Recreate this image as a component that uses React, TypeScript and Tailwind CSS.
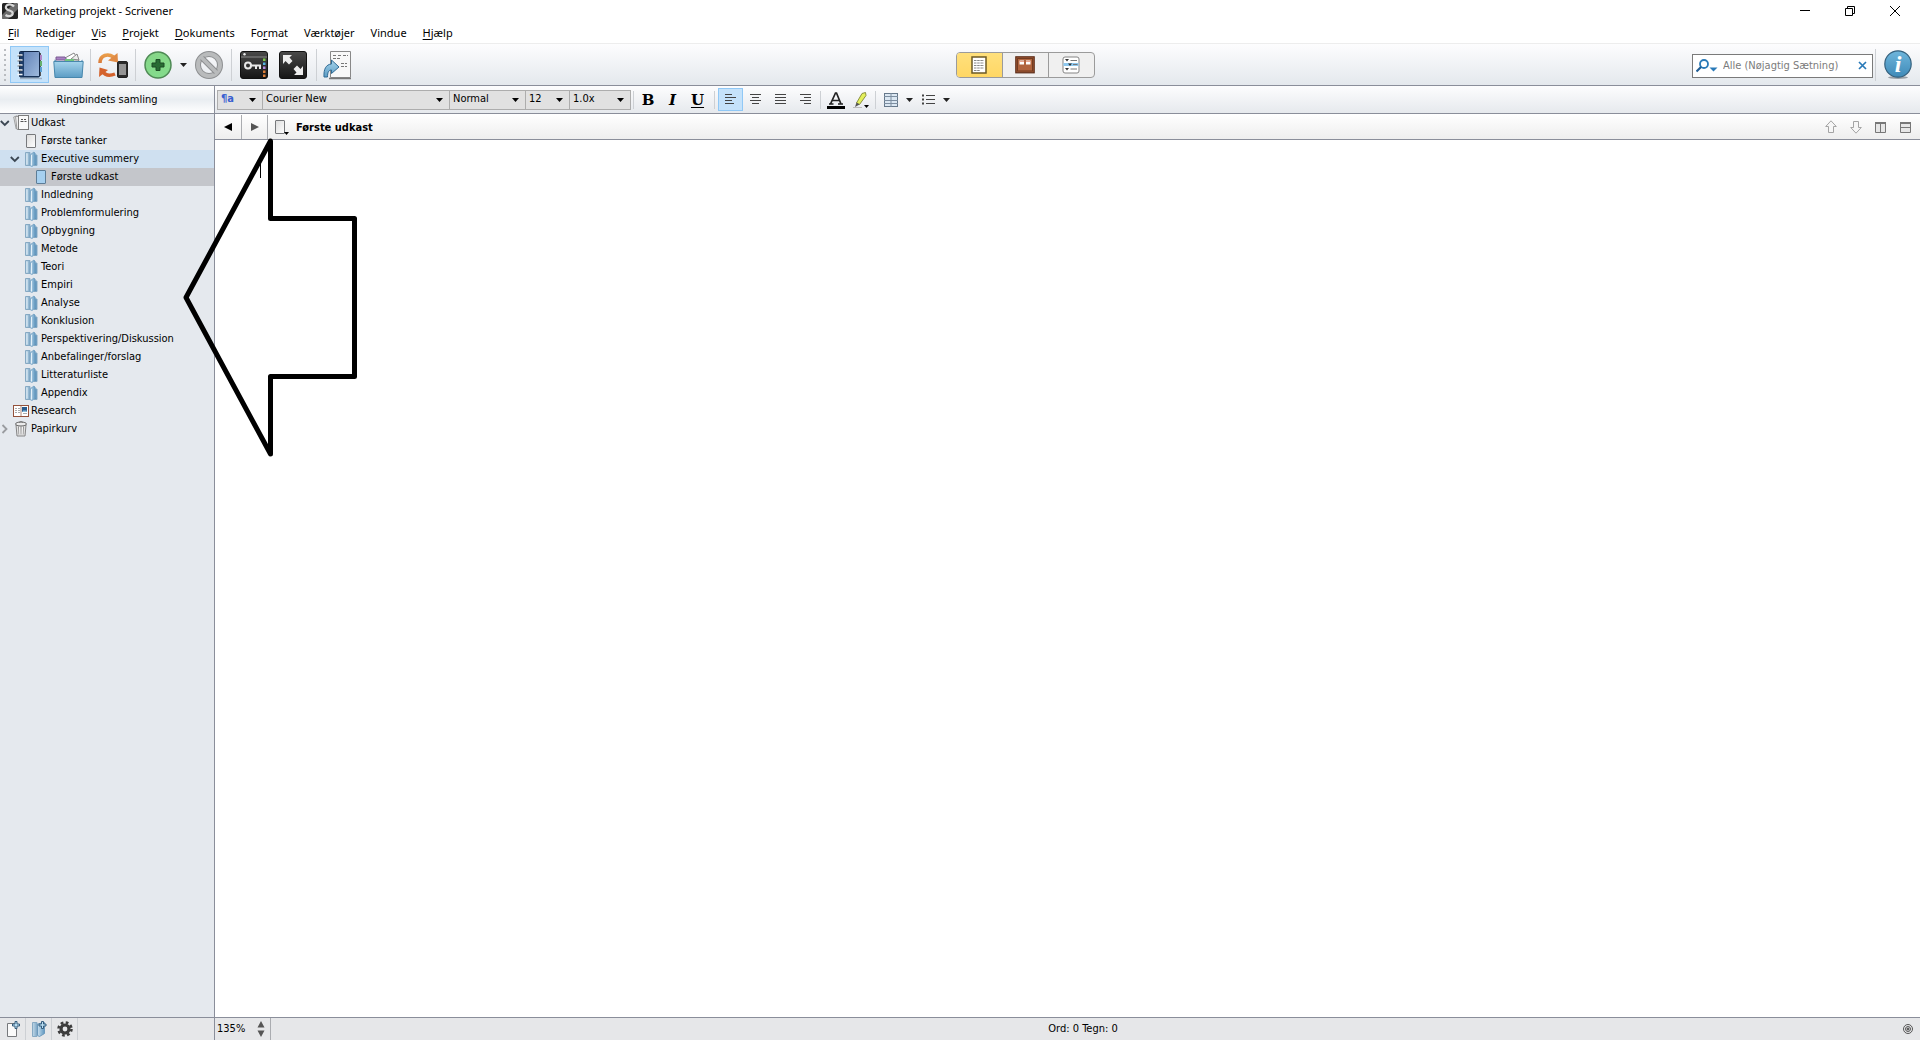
import type { ReactNode } from 'react';

type TreeItem = {
  label: string;
  level: number;
  icon: 'draft' | 'page' | 'folder' | 'bluePage' | 'research' | 'trash';
  open?: boolean;
  closed?: boolean;
  row?: string;
};

const tree: TreeItem[] = [
  { label: 'Udkast', level: 0, icon: 'draft', open: true },
  { label: 'Første tanker', level: 1, icon: 'page' },
  { label: 'Executive summery', level: 1, icon: 'folder', open: true, row: 'bg-[#cfe0f0]' },
  { label: 'Første udkast', level: 2, icon: 'bluePage', row: 'bg-[#c4c6cb]' },
  { label: 'Indledning', level: 1, icon: 'folder' },
  { label: 'Problemformulering', level: 1, icon: 'folder' },
  { label: 'Opbygning', level: 1, icon: 'folder' },
  { label: 'Metode', level: 1, icon: 'folder' },
  { label: 'Teori', level: 1, icon: 'folder' },
  { label: 'Empiri', level: 1, icon: 'folder' },
  { label: 'Analyse', level: 1, icon: 'folder' },
  { label: 'Konklusion', level: 1, icon: 'folder' },
  { label: 'Perspektivering/Diskussion', level: 1, icon: 'folder' },
  { label: 'Anbefalinger/forslag', level: 1, icon: 'folder' },
  { label: 'Litteraturliste', level: 1, icon: 'folder' },
  { label: 'Appendix', level: 1, icon: 'folder' },
  { label: 'Research', level: 0, icon: 'research' },
  { label: 'Papirkurv', level: 0, icon: 'trash', closed: true },
];

const indent = ['pl-0', 'pl-[10px]', 'pl-[20px]'];

// [before, underlined, after]
const menus = [
  ['', 'F', 'il'],
  ['Rediger', '', ''],
  ['', 'V', 'is'],
  ['', 'P', 'rojekt'],
  ['', 'D', 'okuments'],
  ['Fo', 'r', 'mat'],
  ['Værktøjer', '', ''],
  ['Vindue', '', ''],
  ['', 'H', 'jælp'],
];

function Gradients() {
  return (
    <svg className="absolute size-0" aria-hidden="true">
      <defs>
        <linearGradient id="folderA" x1="0" x2="1">
          <stop offset="0" stopColor="#c3d9e8" />
          <stop offset="1" stopColor="#7fa9c8" />
        </linearGradient>
        <linearGradient id="folderB" x1="0" x2="1">
          <stop offset="0" stopColor="#c9dfee" />
          <stop offset="1" stopColor="#5f97c0" />
        </linearGradient>
        <linearGradient id="paper" x1="0" y1="0" x2="1" y2="1">
          <stop offset="0" stopColor="#dcdcdc" />
          <stop offset="1" stopColor="#ffffff" />
        </linearGradient>
        <linearGradient id="book" x1="0" y1="0" x2="1" y2="1">
          <stop offset="0" stopColor="#6484b8" />
          <stop offset="1" stopColor="#9db9dc" />
        </linearGradient>
        <linearGradient id="bin" x1="0" y1="0" x2="0" y2="1">
          <stop offset="0" stopColor="#a5d4ec" />
          <stop offset="1" stopColor="#5c9cc4" />
        </linearGradient>
        <linearGradient id="orange" x1="0" y1="0" x2="0" y2="1">
          <stop offset="0" stopColor="#e99c49" />
          <stop offset="1" stopColor="#d97a3a" />
        </linearGradient>
        <linearGradient id="green" x1="0" y1="0" x2="0" y2="1">
          <stop offset="0" stopColor="#86d688" />
          <stop offset="1" stopColor="#84dc8c" />
        </linearGradient>
        <linearGradient id="dark" x1="0" y1="0" x2="0" y2="1">
          <stop offset="0" stopColor="#4a4a4a" />
          <stop offset="1" stopColor="#151515" />
        </linearGradient>
        <linearGradient id="info" x1="0" y1="0" x2="0" y2="1">
          <stop offset="0" stopColor="#6fb6dc" />
          <stop offset="1" stopColor="#3f8ab8" />
        </linearGradient>
      </defs>
    </svg>
  );
}

function Caret({ className = 'text-black' }: { className?: string }) {
  return (
    <svg width="7" height="4" viewBox="0 0 7 4" className={className}>
      <path d="M0 0h7L3.5 4z" fill="currentColor" />
    </svg>
  );
}

function Separator({ className }: { className: string }) {
  return <span className={`w-px shrink-0 bg-[#cdd0d4] ${className}`} />;
}

function TreeIcon({ icon }: { icon: TreeItem['icon'] }) {
  if (icon === 'folder')
    return (
      <svg width="16" height="16" viewBox="0 0 16 16">
        <path d="M2.5 1.5h4.5v13H2.500z" fill="url(#folderA)" stroke="#86a9c3" />
        <path d="M11.500 4h2.500v10.500h-3z" fill="#5d93bd" stroke="#86a9c3" />
        <path d="M7.500 3.500L11 1l1.200 1.500v10.500L9 15.500l-2-1z" fill="url(#folderB)" stroke="#6f9dc0" strokeWidth=".8" />
        <path d="M4 2.500v11M8.500 4v10.500" stroke="#e4f0f8" />
      </svg>
    );
  if (icon === 'page' || icon === 'bluePage')
    return (
      <svg width="16" height="16" viewBox="0 0 16 16">
        {icon === 'page' ? (
          <rect x="3.500" y="1.500" width="9" height="13" rx="0.500" fill="url(#paper)" stroke="#77797c" />
        ) : (
          <rect x="3.500" y="1.500" width="9" height="13" rx="0.500" fill="#a6d0f0" stroke="#5d7d97" />
        )}
      </svg>
    );
  if (icon === 'draft')
    return (
      <svg width="16" height="16" viewBox="0 0 16 16">
        <path d="M.7 2l3.500-1.200V13l-1 1z" fill="#eee" stroke="#8b8b8b" strokeWidth=".8" />
        <path d="M2.500 1.500h4v13H4z" fill="#eee" stroke="#8b8b8b" strokeWidth=".8" />
        <rect x="5.500" y=".5" width="10" height="14" fill="#fafafa" stroke="#7c7c7c" />
        <path d="M8 4.500h2m1 0h2M7.500 6.500h3m1 0h2" stroke="#555" />
      </svg>
    );
  if (icon === 'research')
    return (
      <svg width="16" height="16" viewBox="0 0 16 16">
        <rect x=".5" y="2.500" width="15" height="11" fill="#fff" stroke="#94513a" />
        <path d="M8 3v10" stroke="#b08a7a" />
        <path d="M2 5.500h2m1 0h2M2 7.500h2m1 0h2M2 9.500h2m1 0h2M10 10.500h4" stroke="#aaa" />
        <rect x="9" y="4" width="5" height="5" fill="#285a8c" />
        <path d="M9 9l2-2 1 1 1-1 1 2z" fill="#8fc0de" />
      </svg>
    );
  return (
    <svg width="16" height="16" viewBox="0 0 16 16">
      <path d="M3 4h10l-1 11H4z" fill="#e2e2e2" stroke="#858585" />
      <path d="M5.500 5.500l.5 8M8 5.500v8m2.500-8l-.5 8" stroke="#909090" />
      <path d="M6.500 5.500l.3 8m2.400 0l.3-8" stroke="#fff" strokeWidth=".7" />
      <ellipse cx="8" cy="3" rx="5.500" ry="2" fill="#ececec" stroke="#666" />
      <path d="M6 1.500Q8-.5 10 1.500" fill="none" stroke="#777" />
    </svg>
  );
}

function Chevron({ open }: { open?: boolean }) {
  return (
    <svg width="10" height="10" viewBox="0 0 10 10" fill="none" strokeWidth="1.8">
      {open ? <path d="M.8 3L4.800 7l4-4" stroke="#3b4652" /> : <path d="M2.500 1l4 4-4 4" stroke="#9a9ca0" />}
    </svg>
  );
}

function Combo({ label, value, width, className = '' }: { label: string; value: string; width: string; className?: string }) {
  return (
    <div className={`relative -ml-px flex items-center border border-[#adadad] bg-[#e1e1e1] h-5 ${width}`}>
      <select aria-label={label} className={`h-full w-full appearance-none pl-[3px] outline-none ${className}`}>
        <option>{value}</option>
      </select>
      <span className="pointer-events-none absolute right-[6px]">
        <Caret />
      </span>
    </div>
  );
}

function ToolButton({ label, active, className = 'w-9', children }: { label: string; active?: boolean; className?: string; children: ReactNode }) {
  return (
    <button
      aria-label={label}
      className={`flex shrink-0 items-center justify-center ${className} ${active ? 'border border-[#90c8f6] bg-[#c5e2fa]' : ''}`}
    >
      {children}
    </button>
  );
}

function TitleBar() {
  return (
    <header className="flex h-[22px] items-center pl-[2px] font-['Noto_Sans',sans-serif]">
      <svg width="16" height="16" viewBox="0 0 16 16">
        <rect width="16" height="16" rx="1.500" fill="#242424" />
        <path d="M0 12L12 0h2.500L16 1.500V6L6 16H1.500L0 14.500z" fill="#6b6b6b" />
        <path d="M12 3.500C9-.3 2.500 1.500 4.200 5.600 5.500 8.200 10.500 7 10.700 10.200 10.800 13.500 6.500 14 3.500 12" fill="none" stroke="#d8d8d8" strokeWidth="2.200" />
      </svg>
      <h1 className="ml-[5px] grow pt-px text-[11px]">Marketing projekt - Scrivener</h1>
      <div className="flex items-center gap-[35px] pr-5">
        <button aria-label="Minimer">
          <svg width="10" height="10" viewBox="0 0 10 10"><path d="M0 4.500h10" stroke="#000" /></svg>
        </button>
        <button aria-label="Gendan">
          <svg width="10" height="10" viewBox="0 0 10 10" fill="none" stroke="#000"><path d="M.5 2.500h7v7h-7zM2.500 2.500v-2h7v7h-2" /></svg>
        </button>
        <button aria-label="Luk">
          <svg width="10" height="10" viewBox="0 0 10 10"><path d="M0 0l10 10M10 0L0 10" stroke="#000" /></svg>
        </button>
      </div>
    </header>
  );
}

function MainToolbar() {
  return (
    <div className="flex h-[43px] items-center justify-between border-t border-b border-t-[#ededed] border-b-[#8a8e9a] bg-linear-to-b from-[#fdfdfe] to-[#e4e8ed]">
      <div className="flex h-full w-[358px] items-center">
        <svg width="10" height="36" viewBox="0 0 10 36">
          <path d="M5 2v34" stroke="#b9bcc0" strokeWidth="2" strokeDasharray="2 3" />
        </svg>
        <ToolButton label="Ringbind" active className="h-[37px] w-[39px]">
          <svg width="28" height="30" viewBox="0 0 28 30">
            <path d="M4 28.500h22" stroke="#9fb0c4" strokeWidth="1.500" />
            <path d="M22 3h3v23h-3z" fill="#555" />
            <path d="M23 5h3v5h-3z" fill="#b086c8" />
            <path d="M23 11h3v5h-3z" fill="#63b06b" />
            <path d="M23 17h3v5h-3z" fill="#5da0d0" />
            <rect x="3.500" y="1.500" width="20" height="25.500" rx="1" fill="#1d3c68" stroke="#132848" />
            <rect x="8" y="2" width="15" height="24" fill="url(#book)" />
            <path d="M1.500 5h5M1.500 10h5M1.500 15h5M1.500 20h5M1.500 24.500h5" stroke="#f5f5f5" strokeWidth="1.500" />
            <path d="M1.500 6h4M1.500 11h4M1.500 16h4M1.500 21h4" stroke="#444" strokeWidth=".7" />
          </svg>
        </ToolButton>
        <ToolButton label="Samlinger" className="w-[38px]">
          <svg width="31" height="28" viewBox="0 0 31 28">
            <path d="M12 7l9-5 5 8H12z" fill="#fff" stroke="#888" />
            <path d="M18 8l6-5 2 6z" fill="#eee" stroke="#888" />
            <path d="M3 6h9l2 3H3z" fill="#a981c4" stroke="#7a5c92" />
            <path d="M12 8h9v3h-9z" fill="#72c47e" />
            <path d="M1.500 8.500l3 2h23l2-2v5h-28z" fill="#4a86ad" />
            <path d="M.8 10.500h29.400l-1.200 16H2z" fill="url(#bin)" stroke="#4787ad" />
          </svg>
        </ToolButton>
        <Separator className="ml-[3px] h-8" />
        <ToolButton label="Synkroniser" className="w-[44px]">
          <svg width="32" height="28" viewBox="0 0 32 28">
            <path d="M3 12C3 4 11 2 16.500 6" fill="none" stroke="url(#orange)" strokeWidth="3.500" />
            <path d="M20.500 2l.5 9.500-10-2z" fill="#e08b45" />
            <path d="M5 20c3 4.500 8 5 13 3" fill="none" stroke="#d4622c" strokeWidth="3.500" />
            <path d="M2 26l.5-9.500 8.500 2.500z" fill="#d4622c" />
            <rect x="20.500" y="10.500" width="10" height="16" rx="1.500" fill="#2b2b2b" stroke="#222" />
            <rect x="22" y="13" width="7" height="11" fill="#949494" />
          </svg>
        </ToolButton>
        <Separator className="h-8" />
        <ToolButton label="Tilføj" className="ml-1 w-9">
          <svg width="30" height="30" viewBox="0 0 30 30">
            <circle cx="15" cy="15" r="13" fill="url(#green)" stroke="#4f8a55" strokeWidth="1.500" />
            <path d="M13 9.500h4V13h4v4h-4v3.500h-4V17H9v-4h4z" fill="#296b34" stroke="#1c4b25" />
          </svg>
        </ToolButton>
        <button aria-label="Tilføj menu" className="ml-1"><Caret className="text-[#222]" /></button>
        <ToolButton label="Slet" className="ml-0.5 w-10">
          <svg width="30" height="30" viewBox="0 0 30 30" fill="none">
            <circle cx="15" cy="15" r="11" stroke="#8d8f91" strokeWidth="6" />
            <circle cx="15" cy="15" r="11" stroke="#b9bbbc" strokeWidth="4" />
            <path d="M8 8l14 14" stroke="#8d8f91" strokeWidth="5.500" />
            <path d="M7.500 7.500l15 15" stroke="#b9bbbc" strokeWidth="3.500" />
          </svg>
        </ToolButton>
        <Separator className="ml-0.5 h-8" />
        <ToolButton label="Nøgleord" className="ml-[3px] w-[38px]">
          <svg width="30" height="30" viewBox="0 0 30 30">
            <rect x="1.500" y="1.500" width="27" height="27" rx="2.500" fill="url(#dark)" stroke="#111" />
            <path d="M2 7h26" stroke="#8a8a8a" />
            <circle cx="5.500" cy="4.200" r="1.200" fill="#eee" />
            <circle cx="9" cy="15.500" r="3" fill="none" stroke="#e8e8e8" strokeWidth="2" />
            <path d="M12 15.500h10M17 16v3m4-3v3" stroke="#e8e8e8" strokeWidth="2" />
            <path d="M24 8.500h2.500V11H24z" fill="#7ecb4b" />
            <path d="M24 12.500h2.500V15H24z" fill="#55b3e0" />
            <path d="M24 16.500h2.500V19H24z" fill="#b68add" />
            <path d="M24 20.500h2.500V23H24zM24 24.500h2.500V27H24z" fill="#e0803a" />
          </svg>
        </ToolButton>
        <ToolButton label="Fuld skærm" className="w-[40px]">
          <svg width="30" height="30" viewBox="0 0 30 30">
            <rect x="1.500" y="1.500" width="27" height="27" rx="2.500" fill="url(#dark)" stroke="#111" />
            <path d="M5 5h9l-2.500 2.500 3 3.500-3.500 3.500L7.500 11 5 14z" fill="#eee" />
            <path d="M25 25h-9l2.500-2.500-3-3.500 3.500-3.500 3.500 3.500 2.500-3z" fill="#eee" />
          </svg>
        </ToolButton>
        <Separator className="ml-[3px] h-8" />
        <ToolButton label="Kompiler" className="ml-0.5 w-9">
          <svg width="30" height="30" viewBox="0 0 30 30">
            <path d="M8.500 1.500h20v26h-20z" fill="#f8f8f8" stroke="#888" />
            <path d="M7 28.500h22" stroke="#777" strokeWidth="1.500" />
            <path d="M11 5.500h4m1 0h3m2 0h5M11 8.500h3m1 0h4M19 13.500h6M19 16.500h6" stroke="#777" strokeDasharray="3 1" />
            <path d="M2 27C1.500 19 4 14.500 9.500 14V10l7.500 7-7.500 6.500V20C6.500 20 5.500 22.500 5.500 27z" fill="url(#bin)" stroke="#2f6a94" />
          </svg>
        </ToolButton>
      </div>

      <div className="flex h-[26px] w-[139px] overflow-hidden rounded-sm border border-[#9b9b9b] bg-[#f0f0f0]">
        <button aria-label="Dokument" className="flex grow basis-0 items-center justify-center bg-linear-to-b from-[#ffe07c] to-[#ffd764]">
          <svg width="16" height="18" viewBox="0 0 16 18">
            <rect x="1" y="1" width="14" height="16" fill="#fff" stroke="#6c5a26" strokeWidth="1.500" />
            <path d="M3 4.500h10M3 7h10M3 9.500h10M3 12h10M3 14.500h6" stroke="#888" strokeDasharray="2.500 .7" />
          </svg>
        </button>
        <button aria-label="Korktavle" className="flex grow basis-0 items-center justify-center border-x border-[#9b9b9b]">
          <svg width="20" height="18" viewBox="0 0 20 18">
            <rect x=".8" y=".8" width="18.400" height="16" fill="#a75a35" stroke="#5e2f1b" strokeWidth="1.200" />
            <rect x="2.500" y="2.500" width="15" height="12.500" fill="#b1653f" stroke="#723c22" />
            <path d="M4.500 4.500h4.500v4H4.500zM11 4.500h4.500v4H11z" fill="#fff" />
            <path d="M4.500 5.500H9M11 5.500h4.500" stroke="#e9a58f" />
          </svg>
        </button>
        <button aria-label="Disposition" className="flex grow basis-0 items-center justify-center">
          <svg width="18" height="18" viewBox="0 0 18 18">
            <rect x="1" y="1" width="16" height="16" rx="2" fill="#fff" stroke="#858585" />
            <path d="M1.500 8.500h15" stroke="#8dc8ef" strokeWidth="3" />
            <path d="M3 3h4L5 5.500zM6 7.500h4L8 10zM3 12h4L5 14.500z" fill="#333" />
            <path d="M8.500 4.500H15M11 8.500h4.500M8.500 13H15" stroke="#777" />
          </svg>
        </button>
      </div>

      <div className="flex items-center">
        <label className="mt-0.5 flex h-6 w-[181px] items-center border border-[#7a7a7a] bg-white px-[3px]">
          <svg width="22" height="14" viewBox="0 0 22 14">
            <circle cx="8" cy="5" r="4" fill="none" stroke="#2a7ab8" strokeWidth="1.800" />
            <path d="M5 8l-4.500 4.500" stroke="#1f5d94" strokeWidth="2.200" />
            <path d="M13.500 8.500h8l-4 4z" fill="#2a7ab8" />
          </svg>
          <input
            aria-label="Søg"
            placeholder="Alle (Nøjagtig Sætning)"
            className="ml-[5px] w-0 grow bg-transparent pt-px text-[11px] outline-none placeholder:text-[#7b7b7b]"
          />
          <button aria-label="Ryd søgning" className="mr-0.5">
            <svg width="9" height="9" viewBox="0 0 9 9"><path d="M1 1l7 7M8 1L1 8" stroke="#2a7ab8" strokeWidth="1.700" /></svg>
          </button>
        </label>
        <Separator className="ml-[2px] h-8" />
        <button aria-label="Inspektør" className="mr-[7px] ml-[7px]">
          <svg width="30" height="30" viewBox="0 0 30 30">
            <ellipse cx="15" cy="27.500" rx="10" ry="1.500" fill="#9aa0a6" />
            <circle cx="15" cy="14" r="13.200" fill="url(#info)" stroke="#35617e" strokeWidth="1.200" />
            <text x="15" y="22" textAnchor="middle" fill="#fff" className="font-['Liberation_Serif',serif] text-[24px] font-bold italic">i</text>
          </svg>
        </button>
      </div>
    </div>
  );
}

const alignLines = [
  { label: 'Venstrestil', d: 'M0 1h7M0 4h11M0 7h7M0 10h9' },
  { label: 'Centrer', d: 'M0 1h11M2 4h7M0 7h11M2 10h7' },
  { label: 'Lige margener', d: 'M0 1h11M0 4h11M0 7h11M0 10h11' },
  { label: 'Højrestil', d: 'M0 1h11M4 4h7M0 7h11M4 10h7' },
];

function FormatBar() {
  return (
    <div className="flex h-7 items-center border-b border-[#8a8e9a] bg-linear-to-b from-[#fdfdfe] to-[#e6e9ed] pl-[3px]">
      <Combo label="Typografi" value="¶a" width="w-[46px]" className="font-bold text-[#3a5fd0]" />
      <Combo label="Skrifttype" value="Courier New" width="w-[188px]" />
      <Combo label="Snit" value="Normal" width="w-[77px]" />
      <Combo label="Størrelse" value="12" width="w-[45px]" />
      <Combo label="Linjeafstand" value="1.0x" width="w-[62px]" />
      <Separator className="ml-0.5 h-[18px]" />
      <div className="ml-0.5 flex font-['DejaVu_Serif',serif] text-[15px] leading-5 font-bold">
        <button aria-label="Fed" className="w-6">B</button>
        <button aria-label="Kursiv" className="w-[25px] italic">I</button>
        <button aria-label="Understreg" className="w-[25px] underline decoration-1 underline-offset-2">U</button>
      </div>
      <Separator className="ml-1 h-[18px]" />
      <div className="ml-[3px] flex">
        {alignLines.map(({ label, d }, i) => (
          <ToolButton key={label} label={label} active={i === 0} className="h-[23px] w-[25px]">
            <svg width="11" height="11" viewBox="0 0 11 11"><path d={d} stroke="#444" transform="translate(0 -.5)" /></svg>
          </ToolButton>
        ))}
      </div>
      <Separator className="ml-0.5 h-[18px]" />
      <ToolButton label="Tekstfarve" className="ml-1 w-[22px]">
        <svg width="18" height="18" viewBox="0 0 18 18">
          <path d="M3.500 13L8.500 2h1L14 13M5.500 9.500h7M2 13h4.500M11 13h5" fill="none" stroke="#222" strokeWidth="1.700" />
          <path d="M0 15h18v3H0z" fill="#000" />
        </svg>
      </ToolButton>
      <ToolButton label="Fremhæv" className="ml-0.5 w-6">
        <svg width="18" height="18" viewBox="0 0 18 18">
          <path d="M10 2.500L13.500 1.500l.5 3-6.500 9-3-1.500z" fill="#e4f05a" stroke="#8b9140" />
          <path d="M4.500 11.500l3 2L3 16z" fill="#555" />
          <path d="M1 16.500h9" stroke="#bbb" />
          <path d="M12 14h5l-2.500 3z" fill="#000" />
        </svg>
      </ToolButton>
      <Separator className="ml-0.5 h-[18px]" />
      <button aria-label="Tabel" className="ml-2 flex items-center gap-2">
        <svg width="14" height="14" viewBox="0 0 14 14">
          <rect x=".5" y=".5" width="13" height="13" fill="#dbe7f2" stroke="#66788a" />
          <path d="M7 0v14M0 3.500h14M0 7.500h14M0 10.500h14" stroke="#7d8ea0" />
        </svg>
        <Caret className="text-[#222]" />
      </button>
      <button aria-label="Liste" className="ml-[9px] flex items-center gap-2">
        <svg width="13" height="12" viewBox="0 0 13 12">
          <path d="M4 1.500h9M4 5.500h9M4 9.500h9" stroke="#444" />
          <path d="M0 1.500h2M0 5.500h2M0 9.500h2" stroke="#444" strokeWidth="2" />
        </svg>
        <Caret className="text-[#222]" />
      </button>
    </div>
  );
}

function DocumentHeader() {
  return (
    <div className="flex h-[26px] items-center border-b border-[#8a8e9a] bg-linear-to-b from-white to-[#eeeeee] pt-px">
      <button aria-label="Tilbage" className="flex h-full w-[27px] items-center justify-center border-r border-[#aaacb0]">
        <svg width="8" height="8" viewBox="0 0 8 8"><path d="M8 0v8L0 4z" fill="#000" /></svg>
      </button>
      <button aria-label="Frem" className="flex h-full w-[26px] items-center justify-center border-r border-[#aaacb0]">
        <svg width="8" height="8" viewBox="0 0 8 8"><path d="M0 0v8l8-4z" fill="#555" /></svg>
      </button>
      <button aria-label="Dokumentmenu" className="ml-[7px]">
        <svg width="14" height="15" viewBox="0 0 14 15">
          <rect x=".5" y=".5" width="9" height="13" rx=".5" fill="url(#paper)" stroke="#77797c" />
          <path d="M9 12h5l-2.500 3z" fill="#000" />
        </svg>
      </button>
      <h2 className="ml-[7px] grow pt-0.5 font-bold">Første udkast</h2>
      <div className="flex items-center gap-[13px] pr-2">
        <button aria-label="Forrige dokument">
          <svg width="12" height="14" viewBox="0 0 12 14"><path d="M6 .8L11.300 6.500H8.500v6h-5v-6H.7z" fill="#f6f6f6" stroke="#a4a4a4" /></svg>
        </button>
        <button aria-label="Næste dokument">
          <svg width="12" height="14" viewBox="0 0 12 14"><path d="M6 13.200L11.300 7.500H8.500v-6h-5v6H.7z" fill="#f6f6f6" stroke="#a4a4a4" /></svg>
        </button>
        <button aria-label="Del lodret">
          <svg width="12" height="11" viewBox="0 0 12 11"><path d="M.5 1h10v9.500H.5zM5.500 1v9.500" fill="#e6e6e6" stroke="#777" /><path d="M0 1h11" stroke="#777" strokeWidth="2" /></svg>
        </button>
        <button aria-label="Del vandret">
          <svg width="12" height="11" viewBox="0 0 12 11"><path d="M.5 1h10v9.500H.5zM.5 5.500h10" fill="#e6e6e6" stroke="#777" /><path d="M0 1h11" stroke="#777" strokeWidth="2" /></svg>
        </button>
      </div>
    </div>
  );
}

function Binder() {
  return (
    <aside className="flex w-[215px] shrink-0 flex-col border-r border-[#8a8e9a] bg-[#e5e9ee]">
      <h2 className="flex h-7 items-center justify-center border-b border-[#8a8e9a] bg-linear-to-b from-white via-[#e9edf1] to-white pt-0.5">
        Ringbindets samling
      </h2>
      <ul>
        {tree.map((item, i) => (
          <li key={i} className={`flex h-[18px] items-center ${indent[item.level]} ${item.row ?? ''}`}>
            <span className="w-[13px]">{(item.open || item.closed) && <Chevron open={item.open} />}</span>
            <TreeIcon icon={item.icon} />
            <span className="ml-[2px] pt-px whitespace-nowrap">{item.label}</span>
          </li>
        ))}
      </ul>
    </aside>
  );
}

function StatusBar() {
  return (
    <footer className="flex h-[23px] shrink-0 items-center border-t border-[#8a8e9a] bg-[#e6e7e9]">
      <div className="flex h-full w-[215px] border-r border-[#8a8e9a]">
        <ToolButton label="Ny tekst" className="w-[25px]">
          <svg width="16" height="18" viewBox="0 0 16 18">
            <path d="M2.500 3.500h9v13h-9z" fill="#fafafa" stroke="#77797c" />
            <path d="M10 1.500h2v2.500h2.500v2H12v2.500h-2V6H7.500V4H10z" fill="#b8dcf0" stroke="#355c7d" />
          </svg>
        </ToolButton>
        <Separator className="h-full bg-[#aaacb0]" />
        <ToolButton label="Ny mappe" className="w-[25px]">
          <svg width="16" height="18" viewBox="0 0 16 18">
            <path d="M1.500 2.500H6v14H1.500z" fill="url(#folderA)" stroke="#86a9c3" />
            <path d="M6.500 4l7-1.500v11l-5 3-2-1z" fill="url(#folderB)" stroke="#6c9abd" />
            <path d="M10.500 1.500h2v2.500H15v2h-2.500v2.500h-2V6H8V4h2.500z" fill="#b8dcf0" stroke="#355c7d" />
          </svg>
        </ToolButton>
        <Separator className="h-full bg-[#aaacb0]" />
        <ToolButton label="Indstillinger" className="w-[25px]">
          <svg width="16" height="16" viewBox="0 0 16 16" fill="none" stroke="#3c3c3c">
            <circle cx="8" cy="8" r="4" strokeWidth="3.200" />
            <circle cx="8" cy="8" r="6.500" strokeWidth="2.500" strokeDasharray="2.700 2.400" />
          </svg>
        </ToolButton>
        <Separator className="h-full bg-[#aaacb0]" />
      </div>
      <div className="flex h-full w-14 items-center justify-between border-r border-[#aaacb0] pr-[5px] pl-[2px]">
        <span>135%</span>
        <button aria-label="Zoom">
          <svg width="8" height="16" viewBox="0 0 8 16"><path d="M4 0l3.500 6.500h-7zM4 16L.5 9.500h7z" fill="#555" /></svg>
        </button>
      </div>
      <p className="grow pr-2 text-center">Ord: 0 Tegn: 0</p>
      <button aria-label="Mål" className="mr-[7px]">
        <svg width="10" height="10" viewBox="0 0 10 10" fill="none" stroke="#555">
          <circle cx="5" cy="5" r="4.500" />
          <circle cx="5" cy="5" r="2.500" />
          <circle cx="5" cy="5" r="1" fill="#555" />
        </svg>
      </button>
    </footer>
  );
}

export default function App() {
  return (
    <div className="flex min-h-screen flex-col bg-white font-['DejaVu_Sans_Condensed','DejaVu_Sans',sans-serif] text-[11px] text-black">
      <Gradients />
      <TitleBar />
      <nav className="flex h-[21px] items-center gap-4 pt-px pl-2 font-['Noto_Sans',sans-serif]">
        {menus.map(([before, key, after]) => (
          <button key={before + key}>
            {before}
            <u className="underline-offset-2">{key}</u>
            {after}
          </button>
        ))}
      </nav>
      <MainToolbar />
      <div className="relative flex grow">
        <Binder />
        <main className="flex grow flex-col">
          <FormatBar />
          <DocumentHeader />
          <div className="grow pt-6 pl-[45px]">
            <div className="h-[14px] w-px bg-black" />
          </div>
        </main>
        <svg className="pointer-events-none absolute top-[50px] left-[180px]" width="180" height="326" viewBox="180 136 180 326">
          <path
            d="M270.500 141V218.500H354.500V376.500H270.500V454L186 297.500z"
            fill="none"
            stroke="#000"
            strokeWidth="5"
            strokeLinejoin="round"
          />
        </svg>
      </div>
      <StatusBar />
    </div>
  );
}
